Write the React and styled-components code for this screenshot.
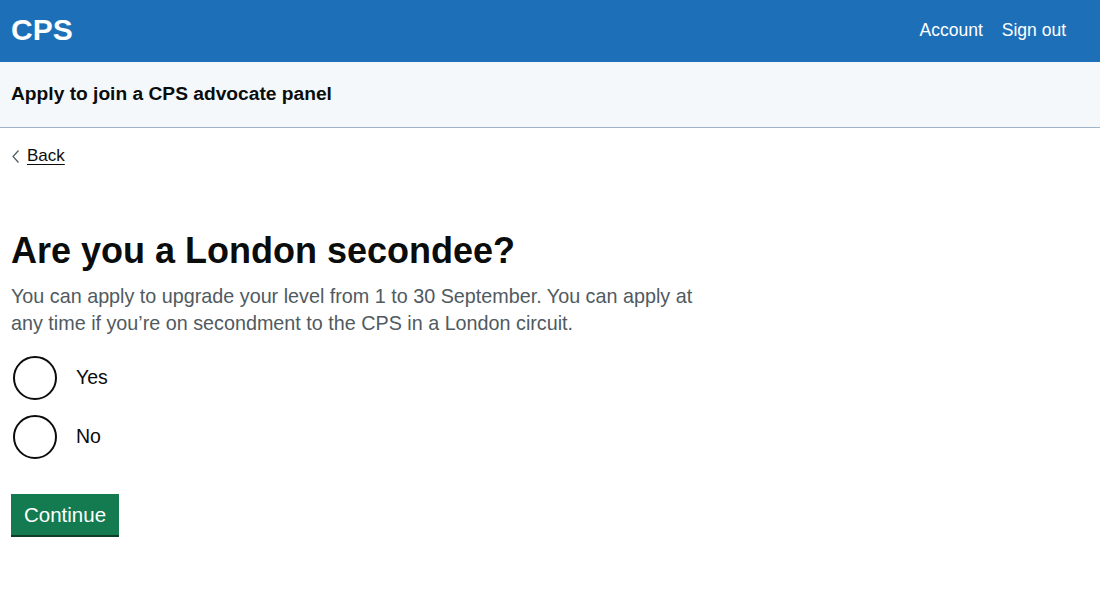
import React from "react";
import styled, { createGlobalStyle } from "styled-components";

const Global = createGlobalStyle`
  html, body { margin: 0; padding: 0; background: #fff; }
  body { font-family: "Liberation Sans", Arial, sans-serif; color: #0b0c0c; -webkit-font-smoothing: antialiased; }
  * { box-sizing: border-box; }
`;

const Header = styled.header`
  background: #1d70b8;
  height: 62px;
  display: flex;
  align-items: center;
  justify-content: space-between;
  padding: 0 34px 0 11px;
`;

const Logo = styled.a`
  color: #fff;
  font-weight: 700;
  font-size: 30px;
  text-decoration: none;
  margin-top: -2px;
`;

const Nav = styled.nav`
  display: flex;
  gap: 19px;
`;

const NavLink = styled.a`
  color: #fff;
  font-size: 17.5px;
  text-decoration: none;
  margin-top: -2px;
`;

const ServiceBar = styled.div`
  background: #f4f8fb;
  height: 66px;
  border-bottom: 1px solid #a0b4c8;
  display: flex;
  align-items: center;
  padding: 0 11px;
`;

const ServiceName = styled.div`
  font-weight: 700;
  font-size: 19.2px;
  margin-top: -2px;
`;

const Main = styled.main`
  padding: 18px 11px 40px;
`;

const BackLink = styled.a`
  display: inline-flex;
  align-items: center;
  gap: 8px;
  color: #0b0c0c;
  font-size: 17px;
  text-decoration: none;
  padding-left: 1px;
  span { text-decoration: underline; text-underline-offset: 3px; }
`;

const H1 = styled.h1`
  margin: 64px 0 12px;
  font-size: 36px;
  font-weight: 700;
  line-height: 40px;
`;

const Hint = styled.p`
  margin: 0 0 19px;
  font-size: 19.75px;
  line-height: 27px;
  color: #505a5f;
  max-width: 705px;
`;

const Radios = styled.div`
  display: flex;
  flex-direction: column;
  gap: 15px;
`;

const RadioRow = styled.label`
  display: flex;
  align-items: center;
  gap: 19px;
  font-size: 19.5px;
  padding-left: 2px;
`;

const Circle = styled.span`
  width: 44px;
  height: 44px;
  border: 2px solid #0b0c0c;
  border-radius: 50%;
  flex: none;
`;

const Button = styled.button`
  margin-top: 35px;
  background: #137b4f;
  color: #fff;
  border: none;
  font-family: inherit;
  font-size: 20.5px;
  width: 108px;
  height: 41px;
  padding: 1px 0 0;
  box-shadow: 0 2px 0 #0b3d27;
  cursor: pointer;
`;

export default function App() {
  return (
    <>
      <Global />
      <Header>
        <Logo href="#">CPS</Logo>
        <Nav>
          <NavLink href="#">Account</NavLink>
          <NavLink href="#">Sign out</NavLink>
        </Nav>
      </Header>
      <ServiceBar>
        <ServiceName>Apply to join a CPS advocate panel</ServiceName>
      </ServiceBar>
      <Main>
        <BackLink href="#">
          <svg width="7" height="13" viewBox="0 0 7 13" fill="none">
            <path d="M6.5 0.5 L1 6.5 L6.5 12.5" stroke="#505a5f" strokeWidth="1.2" />
          </svg>
          <span>Back</span>
        </BackLink>
        <H1>Are you a London secondee?</H1>
        <Hint>
          You can apply to upgrade your level from 1 to 30 September. You can apply at
          any time if you’re on secondment to the CPS in a London circuit.
        </Hint>
        <Radios>
          <RadioRow>
            <Circle />
            Yes
          </RadioRow>
          <RadioRow>
            <Circle />
            No
          </RadioRow>
        </Radios>
        <Button>Continue</Button>
      </Main>
    </>
  );
}
